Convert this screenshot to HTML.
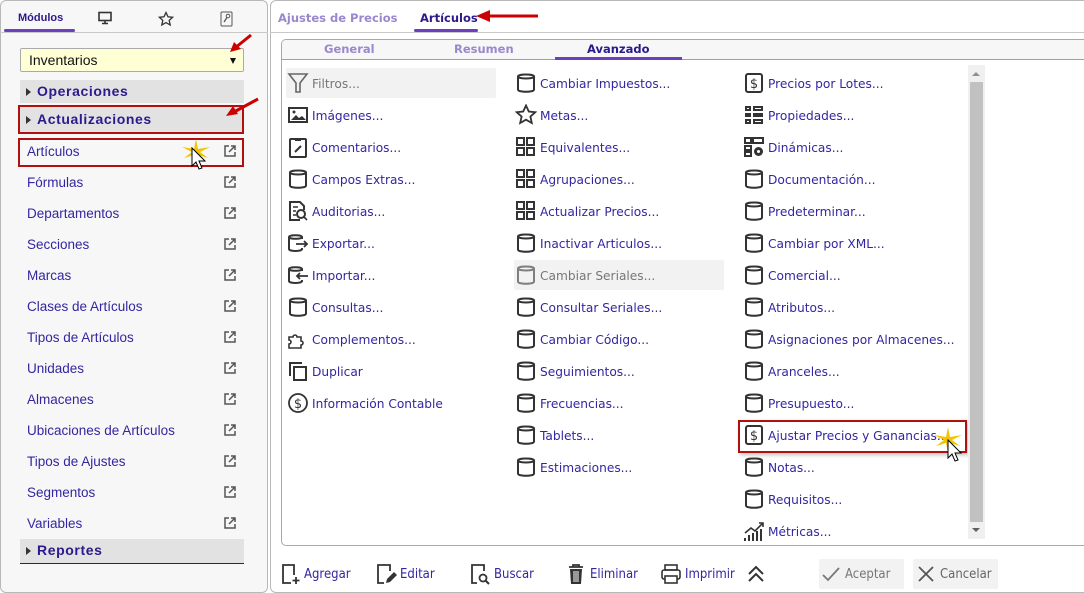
<!DOCTYPE html>
<html><head><meta charset="utf-8">
<style>
*{box-sizing:border-box;margin:0;padding:0}
body{width:1084px;height:593px;background:#fff;position:relative;overflow:hidden;font-family:"DejaVu Sans","Liberation Sans",sans-serif;color:#2e2090}
.a{position:absolute}
.lp{left:0;top:0;width:268px;height:593px;background:#f7f7f7;border:1px solid #b8b8b8;border-radius:6px}
.rp{left:270px;top:0;width:820px;height:593px;border:1px solid #b8b8b8;border-radius:6px;background:#fff}
.lrow{position:absolute;left:27px;font-family:"Liberation Sans",Arial,sans-serif;font-size:13.5px;color:#3326a0}
.ext{position:absolute;left:223px;width:14px;height:14px}
.hdr{position:absolute;left:20px;width:224px;background:#e2e2e2;font-family:"Liberation Sans",Arial,sans-serif;font-weight:bold;font-size:14px;color:#2a1a8c;padding-left:17px;letter-spacing:.6px}
.hdr:before{content:"";position:absolute;left:6px;top:50%;margin-top:-4px;border-left:5px solid #333;border-top:4px solid transparent;border-bottom:4px solid transparent}
.it{position:absolute;font-size:12.2px;color:#3326a0;white-space:nowrap;line-height:16px}
.ic{position:absolute;width:22px;height:22px}
.tb{position:absolute;top:567px;font-size:13px;color:#3326a0;line-height:16px;font-family:"DejaVu Sans Condensed","DejaVu Sans",sans-serif}
</style></head><body>
<svg width="0" height="0" style="position:absolute">
<defs>
<symbol id="db" viewBox="0 0 22 22"><path d="M3 4.5c0-2.6 16-2.6 16 0v13c0 3-16 3-16 0z M3 4.5c0 2.6 16 2.6 16 0" fill="none" stroke="#333" stroke-width="2"/></symbol>
<symbol id="grid" viewBox="0 0 22 22"><g fill="none" stroke="#333" stroke-width="2"><rect x="2" y="2" width="7" height="7"/><rect x="12" y="2" width="7" height="7"/><rect x="2" y="12" width="7" height="7"/><rect x="12" y="12" width="7" height="7"/></g></symbol>
<symbol id="dol" viewBox="0 0 22 22"><rect x="3" y="2" width="16" height="18" rx="2" fill="none" stroke="#333" stroke-width="2"/><text x="11" y="16" font-size="13" text-anchor="middle" fill="#333" font-family="DejaVu Sans">$</text></symbol>
<symbol id="ext" viewBox="0 0 14 14"><path d="M6 2H2v10h10V8 M8 2h4v4 M12 2 6 8" fill="none" stroke="#555" stroke-width="1.5"/></symbol>
</defs></svg>

<div class="a lp"></div>
<div class="a" style="left:18px;top:12px;font-family:'Liberation Sans',Arial;font-size:11px;font-weight:bold;color:#2a1a8c">Módulos</div>
<div class="a" style="left:4px;top:29px;width:71px;height:3px;background:#6a3fc0;border-radius:2px"></div>
<div class="a" style="left:0;top:32px;width:268px;height:1px;background:#c8c8c8"></div>
<svg class="a" style="left:98px;top:11px" width="14" height="14" viewBox="0 0 14 14"><rect x="1" y="1.5" width="12" height="8" fill="none" stroke="#333" stroke-width="1.6"/><path d="M4 12.5h6M7 10v2" stroke="#333" stroke-width="1.6"/></svg>
<svg class="a" style="left:158px;top:11px" width="16" height="16" viewBox="0 0 16 16"><path d="M8 1.5l2 4.3 4.6.5-3.4 3.1 1 4.6L8 11.6 3.8 14l1-4.6L1.4 6.3 6 5.8z" fill="none" stroke="#333" stroke-width="1.3"/></svg>
<svg class="a" style="left:220px;top:11px" width="13" height="16" viewBox="0 0 13 16"><rect x="1" y="1" width="11" height="14" rx="1" fill="none" stroke="#555"/><circle cx="8" cy="5" r="1.8" fill="none" stroke="#555"/><path d="M7 6.5 4 11" stroke="#555" stroke-width="1.3"/></svg>
<div class="a" style="left:20px;top:48px;width:224px;height:24px;background:#ffffd6;border:1px solid #aaa;border-radius:2px;font-family:'Liberation Sans',Arial;font-size:14px;color:#111;padding:3px 0 0 8px">Inventarios</div>
<div class="a" style="left:230px;top:58px;border-top:6px solid #111;border-left:3.5px solid transparent;border-right:3.5px solid transparent"></div>
<div class="hdr" style="top:80px;height:23px;line-height:23px">Operaciones</div>
<div class="hdr" style="top:105px;height:29px;line-height:28px">Actualizaciones</div>
<div class="a" style="left:18px;top:105px;width:226px;height:29px;border:2px solid #b01010"></div>
<div class="a" style="left:18px;top:138px;width:226px;height:29px;border:2px solid #b01010;background:#f7f7f7"></div>
<div class="lrow" style="top:144px">Artículos</div><svg class="ext" style="top:144px"><use href="#ext"/></svg>
<div class="lrow" style="top:175px">Fórmulas</div><svg class="ext" style="top:175px"><use href="#ext"/></svg>
<div class="lrow" style="top:206px">Departamentos</div><svg class="ext" style="top:206px"><use href="#ext"/></svg>
<div class="lrow" style="top:237px">Secciones</div><svg class="ext" style="top:237px"><use href="#ext"/></svg>
<div class="lrow" style="top:268px">Marcas</div><svg class="ext" style="top:268px"><use href="#ext"/></svg>
<div class="lrow" style="top:299px">Clases de Artículos</div><svg class="ext" style="top:299px"><use href="#ext"/></svg>
<div class="lrow" style="top:330px">Tipos de Artículos</div><svg class="ext" style="top:330px"><use href="#ext"/></svg>
<div class="lrow" style="top:361px">Unidades</div><svg class="ext" style="top:361px"><use href="#ext"/></svg>
<div class="lrow" style="top:392px">Almacenes</div><svg class="ext" style="top:392px"><use href="#ext"/></svg>
<div class="lrow" style="top:423px">Ubicaciones de Artículos</div><svg class="ext" style="top:423px"><use href="#ext"/></svg>
<div class="lrow" style="top:454px">Tipos de Ajustes</div><svg class="ext" style="top:454px"><use href="#ext"/></svg>
<div class="lrow" style="top:485px">Segmentos</div><svg class="ext" style="top:485px"><use href="#ext"/></svg>
<div class="lrow" style="top:516px">Variables</div><svg class="ext" style="top:516px"><use href="#ext"/></svg>
<div class="hdr" style="top:539px;height:25px;line-height:23px;border-bottom:1px solid #2a1a8c">Reportes</div>
<svg class="a" style="left:225px;top:32px" width="30" height="24"><path d="M26 3 10 16" stroke="#c00" stroke-width="3"/><path d="M5 20l4-10 7 7z" fill="#c00"/></svg>
<svg class="a" style="left:222px;top:96px" width="40" height="24"><path d="M36 3 12 16" stroke="#c00" stroke-width="3"/><path d="M4 20l7-10 5 8z" fill="#c00"/></svg>
<svg class="a" style="left:178px;top:135px" width="40" height="40"><path d="M18 4l2 10 12-2-10 5 8 6-10-3-2 10-2-10-10 3 8-6-10-5 12 2z" fill="#f3c400"/><path d="M14 13v18l4-4 3 7 3-1-3-7 6 0z" fill="#fff" stroke="#000"/></svg>

<div class="a rp"></div>
<div class="a" style="left:278px;top:11px;font-size:11.5px;font-weight:bold;color:#9a88cc">Ajustes de Precios</div>
<div class="a" style="left:420px;top:11px;font-size:11.5px;font-weight:bold;color:#2a1a8c">Artículos</div>
<div class="a" style="left:414px;top:29px;width:64px;height:3px;background:#6a3fc0;border-radius:2px"></div>
<div class="a" style="left:270px;top:32px;width:814px;height:1px;background:#c8c8c8"></div>
<svg class="a" style="left:472px;top:8px" width="70" height="16"><path d="M66 8H16" stroke="#c00" stroke-width="3"/><path d="M4 8l14-6v12z" fill="#c00"/></svg>
<div class="a" style="left:281px;top:39px;width:810px;height:507px;border:1px solid #a8a8a8;border-radius:5px"></div>
<div class="a" style="left:282px;top:40px;width:802px;height:20px;background:#f7f7f7;border-bottom:1px solid #a0a0a0;border-radius:4px 0 0 0"></div>
<div class="a" style="left:324px;top:42px;font-size:11.5px;font-weight:bold;color:#9a88cc">General</div>
<div class="a" style="left:454px;top:42px;font-size:11.5px;font-weight:bold;color:#9a88cc">Resumen</div>
<div class="a" style="left:587px;top:42px;font-size:11.5px;font-weight:bold;color:#2a1a8c">Avanzado</div>
<div class="a" style="left:555px;top:57px;width:127px;height:3px;background:#6a3fc0"></div>
<div class="a" style="left:286px;top:68px;width:210px;height:30px;background:#f2f2f2;border-radius:2px"></div>
<div class="a" style="left:514px;top:260px;width:210px;height:30px;background:#f2f2f2;border-radius:2px"></div>

<svg class="ic" style="left:287px;top:72px" viewBox="0 0 22 22"><path d="M2 2h18l-7 9v9h-4v-9z" fill="none" stroke="#666" stroke-width="1.6"/></svg><div class="it" style="left:312px;top:76px;color:#777">Filtros...</div>
<svg class="ic" style="left:287px;top:104px" viewBox="0 0 22 22"><rect x="2" y="4" width="18" height="14" fill="none" stroke="#333" stroke-width="2"/><path d="M4 16l5-5 3 3 3-2 4 4z" fill="#333"/><circle cx="7" cy="8" r="1.5" fill="#333"/></svg><div class="it" style="left:312px;top:108px">Imágenes...</div>
<svg class="ic" style="left:287px;top:136px" viewBox="0 0 22 22"><rect x="3" y="3" width="16" height="18" rx="1" fill="none" stroke="#333" stroke-width="2"/><path d="M8 2h6v3H8z" fill="#333"/><path d="M8 16l6-6" stroke="#333" stroke-width="2"/></svg><div class="it" style="left:312px;top:140px">Comentarios...</div>
<svg class="ic" style="left:287px;top:168px"><use href="#db"/></svg><div class="it" style="left:312px;top:172px">Campos Extras...</div>
<svg class="ic" style="left:287px;top:200px" viewBox="0 0 22 22"><path d="M13 20H3V2h10l4 4v4" fill="none" stroke="#333" stroke-width="2"/><circle cx="14" cy="14" r="4" fill="none" stroke="#333" stroke-width="2"/><path d="M17 17l3 3M6 7h5M6 11h3M6 15h3" stroke="#333" stroke-width="1.6"/></svg><div class="it" style="left:312px;top:204px">Auditorias...</div>
<svg class="ic" style="left:287px;top:232px" viewBox="0 0 22 22"><path d="M15 7V5c0-2.4-13-2.4-13 0v12c0 2.6 13 2.6 13 0v-1 M2 5c0 2.4 13 2.4 13 0" fill="none" stroke="#333" stroke-width="2"/><path d="M9 12h11M17 9l3 3-3 3" fill="none" stroke="#333" stroke-width="1.8"/></svg><div class="it" style="left:312px;top:236px">Exportar...</div>
<svg class="ic" style="left:287px;top:264px" viewBox="0 0 22 22"><path d="M15 7V5c0-2.4-13-2.4-13 0v12c0 2.6 13 2.6 13 0v-1 M2 5c0 2.4 13 2.4 13 0" fill="none" stroke="#333" stroke-width="2"/><path d="M21 12H10M13 9l-3 3 3 3" fill="none" stroke="#333" stroke-width="1.8"/></svg><div class="it" style="left:312px;top:268px">Importar...</div>
<svg class="ic" style="left:287px;top:296px"><use href="#db"/></svg><div class="it" style="left:312px;top:300px">Consultas...</div>
<svg class="ic" style="left:287px;top:328px" viewBox="0 0 22 22"><path d="M2 9h4a2 2 0 1 1 4 0h4v4a2 2 0 1 1 0 4v3H2v-4a2 2 0 1 0 0-4z" fill="none" stroke="#333" stroke-width="1.6"/></svg><div class="it" style="left:312px;top:332px">Complementos...</div>
<svg class="ic" style="left:287px;top:360px" viewBox="0 0 22 22"><path d="M3 16V3h12" fill="none" stroke="#333" stroke-width="2"/><rect x="7" y="7" width="12" height="13" fill="none" stroke="#333" stroke-width="2"/></svg><div class="it" style="left:312px;top:364px">Duplicar</div>
<svg class="ic" style="left:287px;top:392px" viewBox="0 0 22 22"><circle cx="11" cy="11" r="9" fill="none" stroke="#333" stroke-width="1.8"/><text x="11" y="16" font-size="13" text-anchor="middle" fill="#333" font-family="DejaVu Sans">$</text></svg><div class="it" style="left:312px;top:396px">Información Contable</div>
<svg class="ic" style="left:515px;top:72px"><use href="#db"/></svg><div class="it" style="left:540px;top:76px">Cambiar Impuestos...</div>
<svg class="ic" style="left:515px;top:104px" viewBox="0 0 22 22"><path d="M11 1.5l2.8 6 6.5.7-4.9 4.4 1.4 6.4L11 15.7 5.2 19l1.4-6.4L1.7 8.2l6.5-.7z" fill="none" stroke="#333" stroke-width="1.8"/></svg><div class="it" style="left:540px;top:108px">Metas...</div>
<svg class="ic" style="left:515px;top:136px"><use href="#grid"/></svg><div class="it" style="left:540px;top:140px">Equivalentes...</div>
<svg class="ic" style="left:515px;top:168px"><use href="#grid"/></svg><div class="it" style="left:540px;top:172px">Agrupaciones...</div>
<svg class="ic" style="left:515px;top:200px"><use href="#grid"/></svg><div class="it" style="left:540px;top:204px">Actualizar Precios...</div>
<svg class="ic" style="left:515px;top:232px"><use href="#db"/></svg><div class="it" style="left:540px;top:236px">Inactivar Articulos...</div>
<svg class="ic" style="left:515px;top:264px;opacity:.6"><use href="#db"/></svg><div class="it" style="left:540px;top:268px;color:#777">Cambiar Seriales...</div>
<svg class="ic" style="left:515px;top:296px"><use href="#db"/></svg><div class="it" style="left:540px;top:300px">Consultar Seriales...</div>
<svg class="ic" style="left:515px;top:328px"><use href="#db"/></svg><div class="it" style="left:540px;top:332px">Cambiar Código...</div>
<svg class="ic" style="left:515px;top:360px"><use href="#db"/></svg><div class="it" style="left:540px;top:364px">Seguimientos...</div>
<svg class="ic" style="left:515px;top:392px"><use href="#db"/></svg><div class="it" style="left:540px;top:396px">Frecuencias...</div>
<svg class="ic" style="left:515px;top:424px"><use href="#db"/></svg><div class="it" style="left:540px;top:428px">Tablets...</div>
<svg class="ic" style="left:515px;top:456px"><use href="#db"/></svg><div class="it" style="left:540px;top:460px">Estimaciones...</div>
<svg class="ic" style="left:743px;top:72px"><use href="#dol"/></svg><div class="it" style="left:768px;top:76px">Precios por Lotes...</div>
<svg class="ic" style="left:743px;top:104px" viewBox="0 0 22 22"><g fill="#333"><rect x="2" y="2" width="6" height="5"/><rect x="10" y="2" width="10" height="5"/><rect x="2" y="9" width="6" height="4"/><rect x="10" y="9" width="10" height="4"/><rect x="2" y="15" width="6" height="5"/><rect x="10" y="15" width="10" height="5"/></g><g fill="#fff"><rect x="4" y="4" width="2" height="1"/><rect x="12" y="4" width="6" height="1"/><rect x="4" y="17" width="2" height="1"/><rect x="12" y="17" width="6" height="1"/></g></svg><div class="it" style="left:768px;top:108px">Propiedades...</div>
<svg class="ic" style="left:743px;top:136px" viewBox="0 0 22 22"><g fill="none" stroke="#333" stroke-width="2"><rect x="2" y="2" width="6" height="5"/><rect x="10" y="2" width="10" height="5"/><rect x="2" y="10" width="6" height="4"/><rect x="2" y="16" width="6" height="4"/></g><circle cx="15.5" cy="15.5" r="4.5" fill="#333"/><circle cx="15.5" cy="15.5" r="1.5" fill="#fff"/></svg><div class="it" style="left:768px;top:140px">Dinámicas...</div>
<svg class="ic" style="left:743px;top:168px"><use href="#db"/></svg><div class="it" style="left:768px;top:172px">Documentación...</div>
<svg class="ic" style="left:743px;top:200px"><use href="#db"/></svg><div class="it" style="left:768px;top:204px">Predeterminar...</div>
<svg class="ic" style="left:743px;top:232px"><use href="#db"/></svg><div class="it" style="left:768px;top:236px">Cambiar por XML...</div>
<svg class="ic" style="left:743px;top:264px"><use href="#db"/></svg><div class="it" style="left:768px;top:268px">Comercial...</div>
<svg class="ic" style="left:743px;top:296px"><use href="#db"/></svg><div class="it" style="left:768px;top:300px">Atributos...</div>
<svg class="ic" style="left:743px;top:328px"><use href="#db"/></svg><div class="it" style="left:768px;top:332px">Asignaciones por Almacenes...</div>
<svg class="ic" style="left:743px;top:360px"><use href="#db"/></svg><div class="it" style="left:768px;top:364px">Aranceles...</div>
<svg class="ic" style="left:743px;top:392px"><use href="#db"/></svg><div class="it" style="left:768px;top:396px">Presupuesto...</div>
<div class="a" style="left:738px;top:420px;width:229px;height:33px;border:2px solid #b01010;box-shadow:2px 2px 4px rgba(0,0,0,.25)"></div>
<svg class="ic" style="left:743px;top:424px"><use href="#dol"/></svg><div class="it" style="left:768px;top:428px">Ajustar Precios y Ganancias...</div>
<svg class="ic" style="left:743px;top:456px"><use href="#db"/></svg><div class="it" style="left:768px;top:460px">Notas...</div>
<svg class="ic" style="left:743px;top:488px"><use href="#db"/></svg><div class="it" style="left:768px;top:492px">Requisitos...</div>
<svg class="ic" style="left:743px;top:520px" viewBox="0 0 22 22"><g fill="#333"><rect x="1" y="18" width="2" height="3"/><rect x="5" y="15" width="2" height="6"/><rect x="9" y="13" width="2" height="8"/><rect x="13" y="11" width="2" height="10"/><rect x="17" y="9" width="2" height="12"/></g><path d="M2 13l6-5 4 3 8-8M16 3h4v4" fill="none" stroke="#333" stroke-width="1.6"/></svg><div class="it" style="left:768px;top:524px">Métricas...</div>
<svg class="a" style="left:930px;top:425px" width="40" height="45"><path d="M18 2l2 10 12-2-10 5 8 6-10-3-2 10-2-10-10 3 8-6-10-5 12 2z" fill="#f3c400"/><path d="M18 15v18l4-4 3 7 3-1-3-7 6 0z" fill="#fff" stroke="#000"/></svg>
<div class="a" style="left:968px;top:65px;width:17px;height:474px;background:#f0f0f0"></div>
<div class="a" style="left:970px;top:82px;width:13px;height:440px;background:#c1c1c1"></div>
<div class="a" style="left:972px;top:72px;border-bottom:4px solid #909090;border-left:4px solid transparent;border-right:4px solid transparent"></div>
<div class="a" style="left:972px;top:528px;border-top:4px solid #606060;border-left:4px solid transparent;border-right:4px solid transparent"></div>

<svg class="a" style="left:281px;top:563px" width="20" height="22" viewBox="0 0 20 22"><path d="M10 20H2V2h11v10" fill="none" stroke="#333" stroke-width="1.8"/><path d="M15 14v7M11.5 17.5h7" stroke="#333" stroke-width="1.8"/></svg><div class="tb" style="left:304px">Agregar</div>
<svg class="a" style="left:376px;top:563px" width="22" height="22" viewBox="0 0 22 22"><path d="M8 20H2V2h12v6" fill="none" stroke="#333" stroke-width="1.8"/><path d="M10 20l1-4 7-7 3 3-7 7z" fill="#333"/></svg><div class="tb" style="left:400px">Editar</div>
<svg class="a" style="left:470px;top:563px" width="22" height="22" viewBox="0 0 22 22"><path d="M7 20H2V2h12v6" fill="none" stroke="#333" stroke-width="1.8"/><circle cx="13" cy="15" r="3.5" fill="none" stroke="#333" stroke-width="1.8"/><path d="M15.5 17.5 19 21" stroke="#333" stroke-width="2"/></svg><div class="tb" style="left:494px">Buscar</div>
<svg class="a" style="left:567px;top:563px" width="18" height="22" viewBox="0 0 18 22"><path d="M2 4h14M6 4V2h6v2" stroke="#333" stroke-width="1.8" fill="none"/><path d="M3 6h12l-1 15H4z" fill="#333"/><path d="M7 8v11M9 8v11M11 8v11" stroke="#fff"/></svg><div class="tb" style="left:590px">Eliminar</div>
<svg class="a" style="left:660px;top:563px" width="22" height="22" viewBox="0 0 22 22"><rect x="5" y="2" width="12" height="5" fill="none" stroke="#333" stroke-width="1.6"/><rect x="2" y="7" width="18" height="9" rx="2" fill="none" stroke="#333" stroke-width="1.6"/><rect x="5" y="13" width="12" height="7" fill="#fff" stroke="#333" stroke-width="1.6"/></svg><div class="tb" style="left:685px">Imprimir</div>
<svg class="a" style="left:746px;top:564px" width="20" height="20" viewBox="0 0 20 20"><path d="M3 10l7-7 7 7M3 17l7-7 7 7" fill="none" stroke="#333" stroke-width="2"/></svg>
<div class="a" style="left:819px;top:559px;width:85px;height:30px;background:#f2f2f2;border-radius:2px"></div>
<svg class="a" style="left:822px;top:566px" width="18" height="16"><path d="M1 9l5 5L17 2" fill="none" stroke="#777" stroke-width="1.8"/></svg>
<div class="tb" style="left:845px;color:#777">Aceptar</div>
<div class="a" style="left:913px;top:559px;width:85px;height:30px;background:#f2f2f2;border-radius:2px"></div>
<svg class="a" style="left:917px;top:565px" width="18" height="18"><path d="M2 2l14 14M16 2 2 16" stroke="#555" stroke-width="1.8"/></svg>
<div class="tb" style="left:940px;color:#666">Cancelar</div>
</body></html>
